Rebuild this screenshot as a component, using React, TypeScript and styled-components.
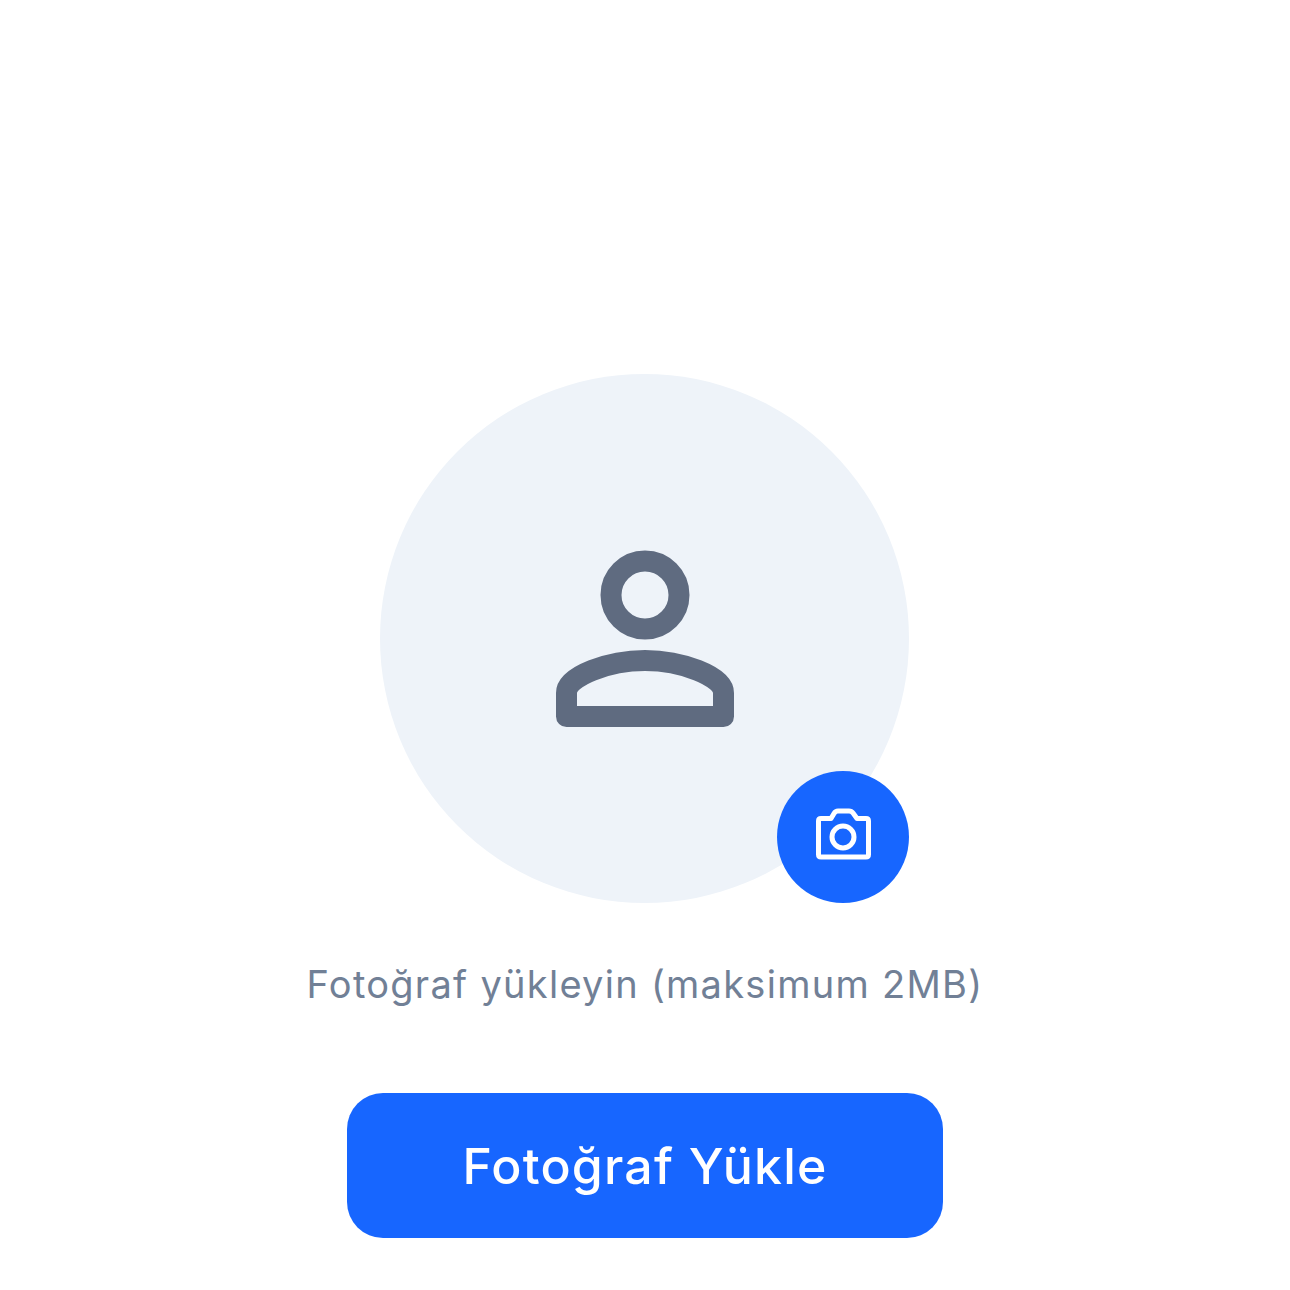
import React from 'react';
import styled, { createGlobalStyle } from 'styled-components';

const GlobalStyle = createGlobalStyle`
  html, body {
    margin: 0;
    background: #ffffff;
  }
`;

const Page = styled.main`
  width: 1290px;
  height: 1290px;
  padding-top: 374px;
  box-sizing: border-box;
  display: flex;
  flex-direction: column;
  align-items: center;
  font-family: Inter, 'Noto Sans', sans-serif;
`;

const Avatar = styled.div`
  position: relative;
  width: 529px;
  height: 529px;
  margin-right: 1px;
  border-radius: 50%;
  background: #eef3f9;
  display: flex;
  align-items: center;
  justify-content: center;
`;

const CameraBadge = styled.button`
  position: absolute;
  right: 0;
  bottom: 0;
  width: 132px;
  height: 132px;
  padding: 0;
  border: none;
  border-radius: 50%;
  background: #1766ff;
  display: flex;
  align-items: center;
  justify-content: center;
`;

const Hint = styled.p`
  margin: 57px 0 0;
  font-size: 38px;
  line-height: 48px;
  letter-spacing: 1.28px;
  color: #718096;
`;

const UploadButton = styled.button`
  margin-top: 85px;
  width: 596px;
  height: 145px;
  border: none;
  border-radius: 36px;
  background: #1766ff;
  color: #ffffff;
  font-family: inherit;
  font-size: 50px;
  font-weight: 450;
  letter-spacing: 1.2px;
`;

const PersonIcon = () => (
  <svg width="180" height="180" viewBox="0 0 180 180" fill="none" stroke="#5f6b80" strokeWidth="21" strokeLinejoin="round">
    <circle cx="90" cy="46" r="34" />
    <path d="M11.5 167.5V144C11.5 127 54 111.5 90 111.5S168.5 127 168.5 144V167.5Z" />
  </svg>
);

const CameraIcon = () => (
  <svg width="60" height="60" viewBox="0 0 60 60" fill="none" stroke="#ffffff" strokeWidth="5" strokeLinejoin="round">
    <path d="M8 11.5H18L21 6.5Q22.5 4 25 4H36Q38.5 4 40 6L44 11.5H53Q55.5 11.5 55.5 14V47.5Q55.5 50 53 50H8Q5.5 50 5.5 47.5V14Q5.5 11.5 8 11.5Z" />
    <circle cx="30" cy="30" r="11" />
  </svg>
);

const App: React.FC = () => {
  return (
    <Page>
      <GlobalStyle />
      <Avatar>
        <PersonIcon />
        <CameraBadge aria-label="Fotoğraf seç">
          <CameraIcon />
        </CameraBadge>
      </Avatar>
      <Hint>Fotoğraf yükleyin (maksimum 2MB)</Hint>
      <UploadButton>Fotoğraf Yükle</UploadButton>
    </Page>
  );
};

export default App;
